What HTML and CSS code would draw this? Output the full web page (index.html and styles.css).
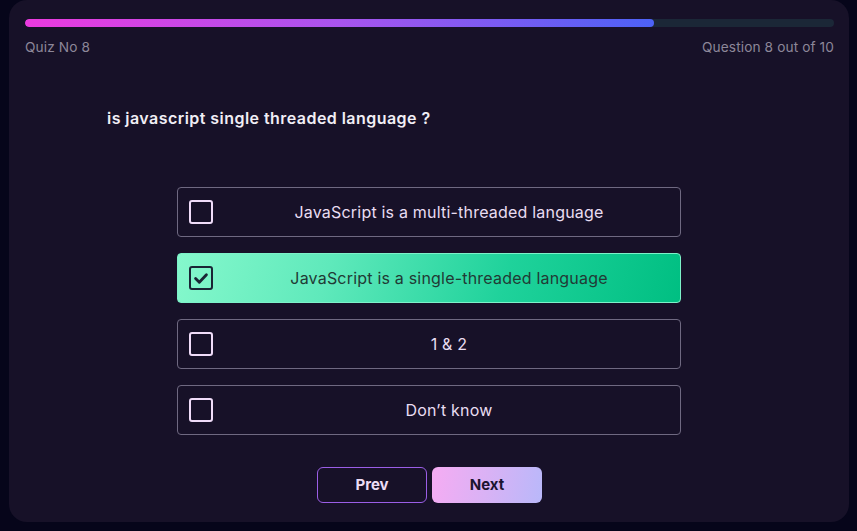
FILE: index.html
```html
<!DOCTYPE html>
<html lang="en">
<head>
<meta charset="utf-8">
<title>Quiz</title>
<link rel="stylesheet" href="styles.css">
</head>
<body>
<main class="card">
  <div class="progress"><div class="progress-fill" style="width: 77.75%"></div></div>
  <div class="meta">
    <span>Quiz No 8</span>
    <span>Question 8 out of 10</span>
  </div>
  <h1 class="question">is javascript single threaded language ?</h1>
  <div class="options">
    <div class="option">
      <span class="box"></span>
      <span class="label">JavaScript is a multi-threaded language</span>
    </div>
    <div class="option selected">
      <span class="box"><svg viewBox="0 0 24 24" width="20" height="20"><path d="M5.5 12.5l4.5 4.5L18.5 8" fill="none" stroke="currentColor" stroke-width="3.4" stroke-linecap="round" stroke-linejoin="round"/></svg></span>
      <span class="label">JavaScript is a single-threaded language</span>
    </div>
    <div class="option">
      <span class="box"></span>
      <span class="label">1 &amp; 2</span>
    </div>
    <div class="option">
      <span class="box"></span>
      <span class="label">Don’t know</span>
    </div>
  </div>
  <div class="actions">
    <button class="btn prev">Prev</button>
    <button class="btn next">Next</button>
  </div>
</main>
</body>
</html>
```

FILE: styles.css
```css
* { box-sizing: border-box; }
html, body { margin: 0; padding: 0; }
body {
  background: #06051a;
  font-family: "Inter", "Liberation Sans", sans-serif;
  width: 857px;
  height: 531px;
  overflow: hidden;
}
.card {
  margin-left: 9px;
  width: 840px;
  height: 522px;
  background: #171128;
  border-radius: 18px;
  padding: 19px 15px 0 16px;
}
.progress {
  height: 8px;
  border-radius: 4px;
  background: #1b2737;
  overflow: hidden;
}
.progress-fill {
  height: 100%;
  border-radius: 4px;
  background: linear-gradient(90deg, #ec3adf 0%, #a954ee 50%, #4c62f6 100%);
}
.meta {
  margin-top: 11px;
  display: flex;
  justify-content: space-between;
  font-size: 13.7px;
  line-height: 18px;
  letter-spacing: 0.1px;
  color: #8d8799;
}
.question {
  margin: 52px 0 0 82px;
  font-size: 16px;
  line-height: 20px;
  font-weight: 600;
  letter-spacing: 0.45px;
  color: #f1eef5;
}
.options {
  width: 504px;
  margin: 59px 0 0 152px;
  display: flex;
  flex-direction: column;
  gap: 16px;
}
.option {
  height: 50px;
  border: 1px solid #6f6981;
  border-radius: 4px;
  display: flex;
  align-items: center;
  padding: 0 0 1px 11px;
  color: #e9ddf2;
  font-size: 16px;
  letter-spacing: 0.2px;
}
.box {
  width: 24px;
  height: 24px;
  margin: 1px 5px 0 0;
  border: 2.5px solid #f0dcf9;
  border-radius: 3px;
  display: flex;
  align-items: center;
  justify-content: center;
  flex: none;
}
.label {
  flex: 1;
  text-align: center;
}
.option.selected {
  border-color: #7df2c9;
  background: linear-gradient(105deg, #85f8cc 0%, #5fe9bb 30%, #1fd29b 65%, #00bf82 100%);
  color: #213a35;
}
.option.selected .box {
  border-color: #1a2535;
  color: #1a2535;
}
.actions {
  margin-top: 32px;
  display: flex;
  justify-content: center;
  gap: 5px;
}
.btn {
  width: 110px;
  height: 36px;
  border-radius: 6px;
  padding: 0 0 2px;
  font-family: "Inter", "Liberation Sans", sans-serif;
  font-size: 15px;
  font-weight: 700;
  cursor: pointer;
}
.prev {
  background: transparent;
  border: 1px solid #9b5ee6;
  color: #ecdcf5;
}
.next {
  border: none;
  background: linear-gradient(100deg, #f6acf3 0%, #d9b2f5 50%, #b9b8fa 100%);
  color: #1c1430;
}
```
